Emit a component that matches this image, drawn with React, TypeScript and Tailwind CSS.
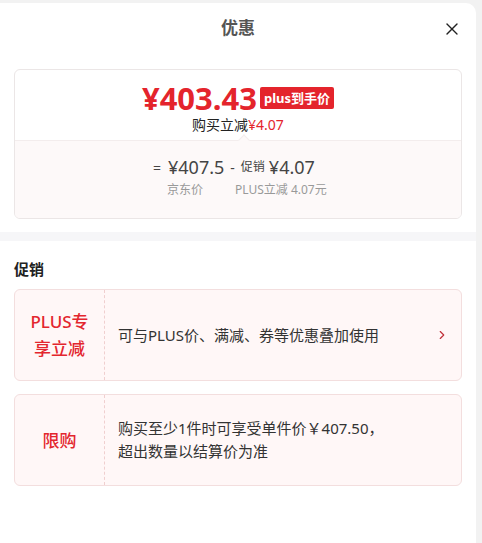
import { X, ChevronRight } from "lucide-react";

const font = { fontFamily: '"Noto Sans", "Noto Sans CJK SC", sans-serif' };

function PromoCard({ tag, children, arrow }: { tag: React.ReactNode; children: React.ReactNode; arrow?: boolean }) {
  return (
    <div className="flex h-[92px] rounded-[6px] border border-[#f3dede] bg-[#fff7f7]">
      <div className="flex w-[90px] shrink-0 items-center justify-center border-r border-dashed border-[#f0cfcf] px-3 text-center text-[17px] font-medium leading-[27px] text-[#e3262e]">
        {tag}
      </div>
      <div className="flex flex-1 items-center pl-[13px] pr-[12px] text-[15px] leading-[23px] text-[#333]">
        <div className="flex-1">{children}</div>
        {arrow && <ChevronRight className="h-[14px] w-[14px] text-[#c0313a]" strokeWidth={2} />}
      </div>
    </div>
  );
}

export default function App() {
  return (
    <div className="h-[543px] w-[482px] bg-[#f2f2f2] pt-[3px]" style={font}>
      <div className="h-[540px] w-[476px] rounded-tr-[10px] bg-white">
        <div className="relative flex h-[50px] items-center justify-center">
          <span className="text-[17px] font-bold text-[#555]">优惠</span>
          <X className="absolute right-[14px] top-[16px] h-[20px] w-[20px] text-[#222]" strokeWidth={1.6} />
        </div>
        <div className="px-[14px] pt-[16px]">
          <div className="overflow-hidden rounded-[6px] border border-[#ebe6e6]">
            <div className="flex flex-col items-center pt-[11px] pb-[5px]">
              <div className="flex h-[34px] items-center gap-[3px]">
                <span className="text-[31px] font-bold leading-[34px] text-[#e4242c]">¥403.43</span>
                <span className="rounded-[2px] bg-[#e4242c] px-[4px] text-[13px] font-bold leading-[22px] text-white">plus到手价</span>
              </div>
              <div className="text-[14px] leading-[20px] text-[#222]">
                购买立减<span className="text-[#e4242c]">¥4.07</span>
              </div>
            </div>
            <div className="relative border-t border-[#f3eded] bg-[#fdf9f9] pt-[14px] pb-[19px]">
              <div className="absolute left-[225px] top-[-5px] h-[8px] w-[8px] rotate-45 border-l border-t border-[#f3eded] bg-[#fdf9f9]" />
              <div className="flex items-center pl-[138px] text-[#444]">
                <span className="text-[14px]">=</span>
                <span className="ml-[7px] text-[18px] leading-[24px]">¥407.5</span>
                <span className="ml-[6px] text-[14px]">-</span>
                <span className="ml-[6px] text-[12px]">促销</span>
                <span className="ml-[4px] text-[18px] leading-[24px]">¥4.07</span>
              </div>
              <div className="mt-[2px] flex pl-[152px] text-[12px] text-[#999]">
                <span className="w-[68px]">京东价</span>
                <span>PLUS立减 4.07元</span>
              </div>
            </div>
          </div>
        </div>
        <div className="mt-[13px] h-[9px] bg-[#f6f6f8]" />
        <div className="px-[14px]">
          <div className="pt-[17px] pb-[9px] text-[15px] font-bold leading-[22px] text-[#222]">促销</div>
          <PromoCard tag={<>PLUS专<br />享立减</>} arrow>
            可与PLUS价、满减、券等优惠叠加使用
          </PromoCard>
          <div className="h-[13px]" />
          <PromoCard tag="限购">
            购买至少1件时可享受单件价￥407.50，<br />超出数量以结算价为准
          </PromoCard>
        </div>
      </div>
    </div>
  );
}
